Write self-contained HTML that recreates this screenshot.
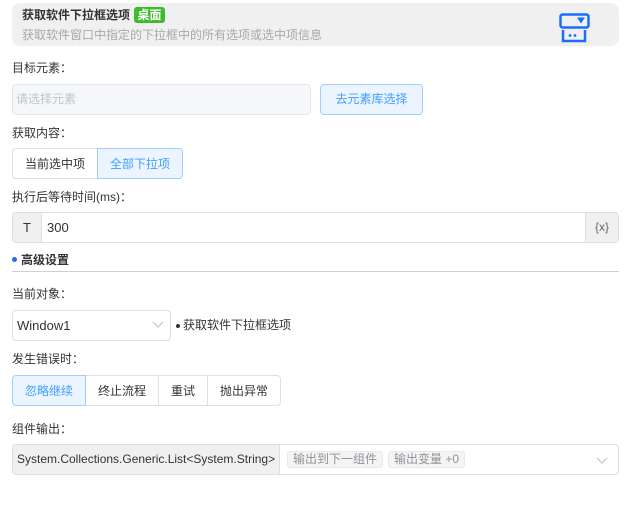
<!DOCTYPE html>
<html><head><meta charset="utf-8"><style>
*{box-sizing:border-box;margin:0;padding:0}
body{width:629px;height:510px;background:#fff;font-family:"Liberation Sans","Noto Sans CJK SC",sans-serif;font-size:12px;color:#333;position:relative;overflow:hidden}
.a{position:absolute}
.lbl{position:absolute;left:12px;font-size:12px;color:#333;line-height:14px}
.seg{position:absolute;border:1px solid #dcdfe6;display:flex;align-items:center;justify-content:center;color:#333;font-size:12px;background:#fff}
.on{background:#ecf5ff;border-color:#a0cfff;color:#409eff;z-index:2}
</style></head><body>
<div class="a" style="left:12px;top:3px;width:607px;height:43px;background:#f0f0f0;border-radius:8px"></div>
<div class="a" style="left:22px;top:8px;font-size:12px;font-weight:bold;color:#333;line-height:15px">获取软件下拉框选项</div>
<div class="a" style="left:134px;top:7px;width:31px;height:16px;background:#3dbd2e;border-radius:3px;color:#fff;font-size:12px;font-weight:bold;text-align:center;line-height:16px">桌面</div>
<div class="a" style="left:22px;top:28px;font-size:12px;color:#a8a8a8;line-height:14px">获取软件窗口中指定的下拉框中的所有选项或选中项信息</div>
<svg class="a" style="left:559px;top:13px" width="32" height="30" viewBox="0 0 32 30">
<rect x="1.5" y="1.5" width="28" height="13" rx="2" fill="none" stroke="#1a6dff" stroke-width="2.5"/>
<path d="M18 4.5h8l-4 6z" fill="#1a6dff"/>
<path d="M4 17v11h22v-11" fill="none" stroke="#1a6dff" stroke-width="2.5"/>
<circle cx="11" cy="22.5" r="1.4" fill="#1a6dff"/><circle cx="16" cy="22.5" r="1.4" fill="#1a6dff"/>
</svg>
<div class="lbl" style="top:61px">目标元素：</div>
<div class="a" style="left:12px;top:84px;width:299px;height:31px;background:#f5f7fa;border:1px solid #e4e7ed;border-radius:4px;color:#c0c4cc;padding-left:3px;line-height:29px">请选择元素</div>
<div class="a" style="left:320px;top:84px;width:103px;height:31px;background:#ecf5ff;border:1px solid #a0cfff;border-radius:4px;color:#409eff;text-align:center;line-height:29px">去元素库选择</div>
<div class="lbl" style="top:126px">获取内容：</div>
<div class="seg" style="left:12px;top:148px;width:86px;height:31px;border-radius:4px 0 0 4px">当前选中项</div>
<div class="seg on" style="left:97px;top:148px;width:86px;height:31px;border-radius:0 4px 4px 0">全部下拉项</div>
<div class="lbl" style="top:190px">执行后等待时间(ms)：</div>
<div class="a" style="left:12px;top:212px;width:607px;height:31px;border:1px solid #dcdfe6;border-radius:4px;overflow:hidden">
<div class="a" style="left:0;top:0;width:29px;height:29px;background:#f0f0f0;border-right:1px solid #dcdfe6;text-align:center;line-height:29px;font-size:13px">T</div>
<div class="a" style="left:34px;top:0;line-height:29px;font-size:13px">300</div>
<div class="a" style="right:0;top:0;width:33px;height:29px;background:#f0f0f0;border-left:1px solid #dcdfe6;text-align:center;line-height:29px;color:#666">{x}</div>
</div>
<div class="a" style="left:12px;top:257px;width:5px;height:5px;border-radius:50%;background:#1a6dff"></div>
<div class="a" style="left:21px;top:253px;font-weight:bold;font-size:12px;line-height:14px">高级设置</div>
<div class="a" style="left:12px;top:271px;width:607px;height:1px;background:#d0d0d0"></div>
<div class="lbl" style="top:287px">当前对象：</div>
<div class="a" style="left:12px;top:310px;width:159px;height:31px;border:1px solid #dcdfe6;border-radius:4px;line-height:29px;padding-left:4px;font-size:13px">Window1</div>
<svg class="a" style="left:152px;top:321px" width="12" height="8"><path d="M1 1l5 5 5-5" fill="none" stroke="#c0c4cc" stroke-width="1.2"/></svg>
<div class="a" style="left:176px;top:324px;width:4px;height:4px;border-radius:50%;background:#333"></div>
<div class="a" style="left:183px;top:318px;line-height:14px">获取软件下拉框选项</div>
<div class="lbl" style="top:352px">发生错误时：</div>
<div class="seg on" style="left:12px;top:375px;width:74px;height:31px;border-radius:4px 0 0 4px">忽略继续</div>
<div class="seg" style="left:85px;top:375px;width:74px;height:31px">终止流程</div>
<div class="seg" style="left:158px;top:375px;width:50px;height:31px">重试</div>
<div class="seg" style="left:207px;top:375px;width:74px;height:31px;border-radius:0 4px 4px 0">抛出异常</div>
<div class="lbl" style="top:422px">组件输出：</div>
<div class="a" style="left:12px;top:444px;width:607px;height:31px;border:1px solid #dcdfe6;border-radius:4px;overflow:hidden">
<div class="a" style="left:0;top:0;width:267px;height:29px;background:#f0f0f0;border-right:1px solid #dcdfe6;line-height:29px;padding-left:4px;font-size:12px">System.Collections.Generic.List&lt;System.String&gt;</div>
<div class="a" style="left:274px;top:6px;width:96px;height:17px;background:#f4f4f5;border:1px solid #e9e9eb;border-radius:3px;color:#909399;text-align:center;line-height:15px">输出到下一组件</div>
<div class="a" style="left:375px;top:6px;width:77px;height:17px;background:#f4f4f5;border:1px solid #e9e9eb;border-radius:3px;color:#909399;text-align:center;line-height:15px">输出变量 +0</div>
<svg class="a" style="left:583px;top:12px" width="12" height="8"><path d="M1 1l5 5 5-5" fill="none" stroke="#c0c4cc" stroke-width="1.2"/></svg>
</div>
</body></html>
